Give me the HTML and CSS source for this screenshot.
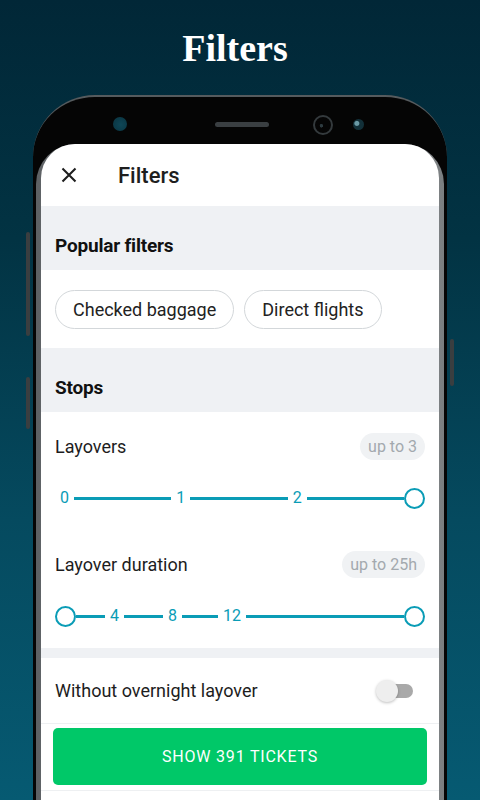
FILE: index.html
```html
<!DOCTYPE html>
<html lang="en">
<head>
	<meta charset="UTF-8">
	<meta name="viewport" content="width=device-width, initial-scale=1.0">
	<title>Filters</title>
	<link rel="stylesheet" href="styles.css">
</head>
<body>
	<h1 class="promo-title">Filters</h1>

	<div class="phone">
		<span class="side-btn left-1"></span>
		<span class="side-btn left-2"></span>
		<span class="side-btn right-1"></span>

		<div class="bezel">
			<span class="cam"></span>
			<span class="speaker"></span>
			<span class="front-cam"></span>
			<span class="sensor"></span>
		</div>

		<div class="glass">
			<div class="screen">
				<div class="app-bar">
					<svg class="close" width="16" height="16" viewBox="0 0 16 16">
						<path d="M1.5 1.5 L14.5 14.5 M14.5 1.5 L1.5 14.5" stroke="#1e1e1e" stroke-width="2.1"/>
					</svg>
					<span class="app-title">Filters</span>
				</div>

				<div class="section-head">Popular filters</div>
				<div class="chips">
					<span class="chip">Checked baggage</span>
					<span class="chip">Direct flights</span>
				</div>

				<div class="section-head">Stops</div>
				<div class="block">
					<div class="row">
						<span class="label">Layovers</span>
						<span class="badge">up to 3</span>
					</div>
					<div class="slider">
						<span class="tick">0</span><span class="line"></span>
						<span class="tick">1</span><span class="line"></span>
						<span class="tick">2</span><span class="line"></span>
						<span class="thumb"></span>
					</div>

					<div class="row second">
						<span class="label">Layover duration</span>
						<span class="badge">up to 25h</span>
					</div>
					<div class="slider">
						<span class="thumb"></span><span class="line w29"></span>
						<span class="tick">4</span><span class="line w39"></span>
						<span class="tick">8</span><span class="line w36"></span>
						<span class="tick">12</span><span class="line"></span>
						<span class="thumb"></span>
					</div>
				</div>

				<div class="gap"></div>

				<div class="toggle-row">
					<span class="label">Without overnight layover</span>
					<span class="switch"><span class="knob"></span></span>
				</div>

				<div class="footer">
					<button type="button" class="show-btn">Show 391 tickets</button>
				</div>
			</div>
		</div>
	</div>
</body>
</html>
```

FILE: styles.css
```css
body {
	margin: 0;
	height: 800px;
	overflow: hidden;
	background: linear-gradient(180deg, #012737 0%, #023343 30%, #054a5f 65%, #065a72 100%);
	font-family: Roboto, "Noto Sans", sans-serif;
}

.promo-title {
	margin: 0;
	padding: 26px 10px 0 0;
	height: 95px;
	box-sizing: border-box;
	text-align: center;
	font-family: "Liberation Serif", "Times New Roman", serif;
	font-size: 38px;
	font-weight: bold;
	color: #ffffff;
	line-height: 44px;
}

.phone {
	position: relative;
	width: 414px;
	margin: 0 auto;
	background: #050505;
	border-radius: 62px 62px 0 0;
	padding: 0 3px;
	box-sizing: border-box;
	height: 705px;
	border-top: 2px solid #565b5e;
	display: flex;
	flex-direction: column;
}

.side-btn {
	position: absolute;
	width: 4px;
	background: #3a3e40;
	border-radius: 2px;
}

.side-btn.left-1 { left: -7px; top: 135px; height: 104px; }
.side-btn.left-2 { left: -7px; top: 280px; height: 52px; }
.side-btn.right-1 { right: -7px; top: 242px; height: 47px; }

.bezel {
	height: 47px;
	flex: none;
	position: relative;
}

.bezel span {
	position: absolute;
}

.cam {
	left: 77px;
	top: 20px;
	width: 14px;
	height: 14px;
	border-radius: 50%;
	background: radial-gradient(circle at 55% 55%, #0f4656 0%, #0b3a48 60%, #123843 100%);
}

.speaker {
	left: 179px;
	top: 25px;
	width: 54px;
	height: 5px;
	border-radius: 3px;
	background: #3a3f42;
}

.front-cam {
	left: 277px;
	top: 18px;
	width: 20px;
	height: 20px;
	box-sizing: border-box;
	border-radius: 50%;
	border: 2px solid #343a3d;
	background: radial-gradient(circle at 40% 55%, #2d3a3f 0 1.5px, transparent 2px), #050505;
}

.sensor {
	left: 317px;
	top: 22px;
	width: 11px;
	height: 11px;
	border-radius: 50%;
	background: radial-gradient(circle at 35% 40%, #6a9aa6 0 2px, #123039 3px);
}

.glass {
	background: linear-gradient(90deg, #5c6063 0%, #d6dadc 45%, #e4e6e8 55%, #7a7e80 100%);
	border-radius: 40px 40px 0 0;
	padding: 0 5px;
	flex: 1;
	min-height: 0;
	display: flex;
}

.screen {
	flex: 1;
	background: #ffffff;
	border-radius: 34px 34px 0 0;
	overflow: hidden;
	color: #1b1b1b;
}

.app-bar {
	height: 62px;
	display: flex;
	align-items: center;
	padding-left: 20px;
	box-shadow: 0 1px 2px rgba(0, 0, 0, 0.06);
}

.close {
	margin-right: 41px;
}

.app-title {
	font-size: 22px;
	font-weight: 500;
	color: #1e1e1e;
}

.section-head {
	background: #eff1f4;
	height: 64px;
	box-sizing: border-box;
	display: flex;
	align-items: flex-end;
	padding: 0 0 13px 14px;
	font-size: 19px;
	font-weight: bold;
	letter-spacing: -0.2px;
	color: #111;
}

.chips {
	display: flex;
	gap: 10px;
	padding: 20px 14px 19px;
}

.chip {
	height: 39px;
	display: flex;
	align-items: center;
	padding: 0 17px;
	border: 1px solid #d3d7da;
	border-radius: 20px;
	font-size: 18px;
	color: #222;
	box-sizing: border-box;
}

.block {
	padding: 20px 14px 0 14px;
	height: 236px;
	box-sizing: border-box;
}

.row {
	display: flex;
	justify-content: space-between;
	align-items: center;
	height: 28px;
}

.row.second {
	margin-top: 41px;
}

.label {
	font-size: 18px;
	color: #1d1d1d;
}

.badge {
	background: #f0f2f4;
	color: #a3a9ae;
	font-size: 16px;
	height: 27px;
	line-height: 27px;
	padding: 0 8px;
	border-radius: 14px;
}

.slider {
	display: flex;
	align-items: center;
	height: 22px;
	margin-top: 27px;
	color: #0a9cb6;
}

.tick {
	font-size: 16px;
	padding: 0 5px;
	line-height: 22px;
}

.line {
	flex: 1;
	height: 3px;
	background: #0a9cb6;
}

.line.w29 { flex: 0 0 29px; }
.line.w39 { flex: 0 0 39px; }
.line.w36 { flex: 0 0 36px; }

.thumb {
	width: 21px;
	height: 21px;
	box-sizing: border-box;
	border: 2.5px solid #0a9cb6;
	border-radius: 50%;
	background: #fff;
	flex: none;
}

.gap {
	height: 10px;
	background: #eff1f4;
}

.toggle-row {
	height: 65px;
	display: flex;
	align-items: center;
	justify-content: space-between;
	padding: 0 26px 0 14px;
	border-bottom: 1px solid #eef0f2;
}

.switch {
	position: relative;
	width: 32px;
	height: 14px;
	border-radius: 7px;
	background: #a9a9a9;
}

.knob {
	position: absolute;
	left: -5px;
	top: -4px;
	width: 22px;
	height: 22px;
	border-radius: 50%;
	background: #eeeeee;
	box-shadow: 0 1px 3px rgba(0, 0, 0, 0.25);
}

.footer {
	padding: 4px 12px 5px;
	border-bottom: 1px solid #eef0f2;
}

.show-btn {
	width: 100%;
	height: 57px;
	border: none;
	border-radius: 5px;
	background: #00c868;
	color: #ffffff;
	font-family: Roboto, sans-serif;
	font-size: 16px;
	font-weight: 400;
	letter-spacing: 0.8px;
	text-transform: uppercase;
}
```
